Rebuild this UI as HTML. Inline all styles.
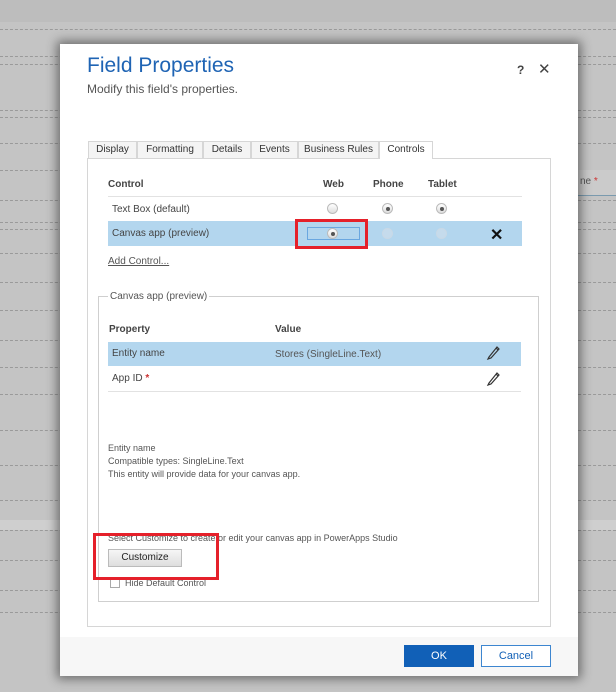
<!DOCTYPE html>
<html><head><style>
*{margin:0;padding:0;box-sizing:border-box}
body{width:616px;height:692px;overflow:hidden;background:#c4c4c4;font-family:"Liberation Sans",sans-serif;position:relative;color:#444}
.a{position:absolute}
.dash{position:absolute;left:0;width:616px;border-top:1px dashed #9a9a9a}
.t{font-size:10px}
.tab{position:absolute;top:141px;height:17px;border:1px solid #d6d6d6;border-bottom:none;background:#f4f4f4;font-size:10px;text-align:center;line-height:16px;color:#333}
.rad{position:absolute;width:11px;height:11px;border-radius:50%;border:1px solid #bbb;background:linear-gradient(#fff,#ddd)}
.rad.on::after{content:"";position:absolute;left:3px;top:3px;width:4px;height:4px;border-radius:50%;background:#555}
.rad.dis{border-color:#c9d9e6;background:#c5dbec}
</style></head><body>
<div class="a" style="left:0;top:0;width:616px;height:22px;background:#bdbdbd"></div>
<div class="dash" style="top:29px"></div>
<div class="dash" style="top:56px"></div>
<div class="dash" style="top:64px"></div>
<div class="dash" style="top:110px"></div>
<div class="dash" style="top:117px"></div>
<div class="dash" style="top:143px"></div>
<div class="dash" style="top:170px"></div>
<div class="dash" style="top:200px"></div>
<div class="dash" style="top:222px"></div>
<div class="dash" style="top:229px"></div>
<div class="dash" style="top:253px"></div>
<div class="dash" style="top:282px"></div>
<div class="dash" style="top:310px"></div>
<div class="dash" style="top:340px"></div>
<div class="dash" style="top:367px"></div>
<div class="dash" style="top:394px"></div>
<div class="dash" style="top:430px"></div>
<div class="dash" style="top:465px"></div>
<div class="dash" style="top:500px"></div>
<div class="dash" style="top:530px"></div>
<div class="dash" style="top:560px"></div>
<div class="dash" style="top:590px"></div>
<div class="dash" style="top:612px"></div>
<div class="a" style="left:578px;top:170px;width:38px;height:26px;background:#cbcbcb;border-bottom:1px solid #7a9aae"></div>
<div class="a t" style="left:580px;top:176px;color:#555">ne <span style="color:#c33">*</span></div>
<div class="a" style="left:0;top:520px;width:616px;height:10px;background:#cfcfcf"></div>

<div class="a" style="left:60px;top:44px;width:518px;height:632px;background:#fff;box-shadow:0 0 10px 3px rgba(0,0,0,.45)">
</div>
<div class="a" style="left:60px;top:637px;width:518px;height:39px;background:#f7f7f7"></div>
<div class="a" style="left:87px;top:54px;font-size:21px;color:#1f64b4">Field Properties</div>
<div class="a" style="left:87px;top:82px;font-size:12px;color:#555">Modify this field's properties.</div>
<div class="a" style="left:517px;top:63px;font-size:12px;color:#444;font-weight:bold">?</div>
<div class="a" style="left:538px;top:60px;font-size:15px;color:#444">✕</div>

<div class="a" style="left:87px;top:158px;width:464px;height:469px;border:1px solid #d6d6d6"></div>
<div class="tab" style="left:88px;width:49px">Display</div>
<div class="tab" style="left:137px;width:66px">Formatting</div>
<div class="tab" style="left:203px;width:48px">Details</div>
<div class="tab" style="left:251px;width:47px">Events</div>
<div class="tab" style="left:298px;width:81px">Business Rules</div>
<div class="tab" style="left:379px;width:54px;background:#fff;height:18px">Controls</div>

<div class="a t" style="left:108px;top:179px;font-weight:bold;color:#444">Control</div>
<div class="a t" style="left:323px;top:179px;font-weight:bold;color:#444">Web</div>
<div class="a t" style="left:373px;top:179px;font-weight:bold;color:#444">Phone</div>
<div class="a t" style="left:428px;top:179px;font-weight:bold;color:#444">Tablet</div>
<div class="a" style="left:108px;top:196px;width:414px;border-top:1px solid #e2e2e2"></div>
<div class="a t" style="left:112px;top:204px">Text Box (default)</div>
<div class="rad" style="left:327px;top:203px"></div>
<div class="rad on" style="left:382px;top:203px"></div>
<div class="rad on" style="left:436px;top:203px"></div>
<div class="a" style="left:108px;top:221px;width:414px;height:25px;background:#b3d6ee"></div>
<div class="a t" style="left:112px;top:228px">Canvas app (preview)</div>
<div class="a" style="left:307px;top:227px;width:53px;height:13px;border:1px solid #6aa7e0"></div>
<div class="rad on" style="left:327px;top:228px"></div>
<div class="rad dis" style="left:382px;top:228px"></div>
<div class="rad dis" style="left:436px;top:228px"></div>
<div class="a" style="left:490px;top:225px;font-size:16px;font-weight:bold;color:#111">✕</div>
<div class="a" style="left:295px;top:219px;width:73px;height:30px;border:3px solid #e5202a"></div>
<div class="a t" style="left:108px;top:256px;text-decoration:underline;color:#555">Add Control...</div>

<div class="a" style="left:98px;top:296px;width:441px;height:306px;border:1px solid #cfcfcf"></div>
<div class="a t" style="left:108px;top:291px;background:#fff;padding:0 2px;color:#555">Canvas app (preview)</div>
<div class="a t" style="left:109px;top:324px;font-weight:bold">Property</div>
<div class="a t" style="left:275px;top:324px;font-weight:bold">Value</div>
<div class="a" style="left:108px;top:342px;width:413px;height:24px;background:#b3d6ee"></div>
<div class="a t" style="left:112px;top:348px">Entity name</div>
<div class="a t" style="left:275px;top:349px;color:#555">Stores (SingleLine.Text)</div>
<svg class="a" style="left:486px;top:344px" width="14" height="16" viewBox="0 0 14 16"><path d="M3 13 L11 3 L13 5 L5 14 L2 15 Z M10 4 L12 6" fill="none" stroke="#333" stroke-width="1.2"/></svg>
<div class="a t" style="left:112px;top:373px">App ID <span style="color:#c33;font-weight:bold">*</span></div>
<svg class="a" style="left:486px;top:370px" width="14" height="16" viewBox="0 0 14 16"><path d="M3 13 L11 3 L13 5 L5 14 L2 15 Z M10 4 L12 6" fill="none" stroke="#333" stroke-width="1.2"/></svg>
<div class="a" style="left:108px;top:391px;width:413px;border-top:1px solid #e2e2e2"></div>
<div class="a" style="left:108px;top:442px;font-size:9px;line-height:13px;color:#555">Entity name<br>Compatible types: SingleLine.Text<br>This entity will provide data for your canvas app.</div>
<div class="a" style="left:108px;top:533px;font-size:9px;color:#555">Select Customize to create or edit your canvas app in PowerApps Studio</div>
<div class="a t" style="left:108px;top:549px;width:74px;height:18px;border:1px solid #bbb;background:linear-gradient(#f6f6f6,#dedede);text-align:center;line-height:16px;color:#222">Customize</div>
<div class="a" style="left:110px;top:578px;width:10px;height:10px;border:1px solid #aaa;background:#fff"></div>
<div class="a" style="left:125px;top:578px;font-size:9px;color:#555">Hide Default Control</div>
<div class="a" style="left:93px;top:533px;width:126px;height:47px;border:3px solid #e5202a"></div>

<div class="a" style="left:404px;top:645px;width:70px;height:22px;background:#1160b7;color:#fff;font-size:11px;text-align:center;line-height:22px">OK</div>
<div class="a" style="left:481px;top:645px;width:70px;height:22px;border:1px solid #3d86d0;background:#fff;color:#1160b7;font-size:11px;text-align:center;line-height:20px">Cancel</div>
</body></html>
